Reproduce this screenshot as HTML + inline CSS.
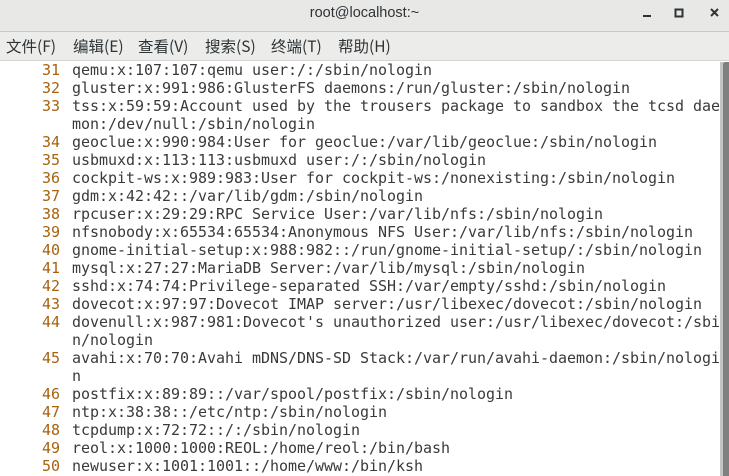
<!DOCTYPE html>
<html><head><meta charset="utf-8"><style>
body{margin:0;width:729px;height:476px;overflow:hidden;background:#fff;position:relative;font-family:"Liberation Sans","Noto Sans CJK SC",sans-serif}
#title{position:absolute;left:0;top:0;width:729px;height:31px;background:#e8e8e7;border-bottom:1px solid #c8c8c6;}
#title .t{position:absolute;left:0;width:729px;top:5px;text-align:center;font-size:14.5px;color:#2e3436}
#menu{position:absolute;left:0;top:32px;width:729px;height:28px;background:#ececeb;border-bottom:1px solid #d6d6d4}
#menu span{position:absolute;top:3px;font-size:15.5px;color:#2e3436;font-family:"Noto Sans CJK SC",sans-serif}
#sb1{position:absolute;left:720px;top:62px;width:3px;height:414px;background:#c4c4c4}
#sb2{position:absolute;left:723px;top:62px;width:6px;height:414px;background:#7e8080;border-top-left-radius:2px}
.r{position:absolute;left:0;width:720px;overflow:hidden;height:18px;font-family:"DejaVu Sans Mono",monospace;font-size:15px;line-height:18px;white-space:pre;color:#3a3a3a;letter-spacing:-0.03px}
.n{position:absolute;left:20px;width:40px;color:#a8620e;text-align:right}
.c{position:absolute;left:72px}
</style></head><body>
<div id="title"><div class="t">root@localhost:~</div>
<svg style="position:absolute;left:620px;top:0" width="109" height="31">
<rect x="23" y="15" width="8" height="2" fill="#2e3436"/>
<rect x="55.5" y="9.5" width="7" height="7" fill="none" stroke="#2e3436" stroke-width="2"/>
<path d="M91 9 L98 16 M98 9 L91 16" stroke="#2e3436" stroke-width="2"/>
</svg></div>
<div id="menu">
<span style="left:6px">文件(F)</span><span style="left:73px">编辑(E)</span><span style="left:138px">查看(V)</span><span style="left:205px">搜索(S)</span><span style="left:271px">终端(T)</span><span style="left:338px">帮助(H)</span>
</div>
<div id="sb1"></div><div id="sb2"></div>
<div class="r" style="top:61px"><span class="n">31</span><span class="c">qemu:x:107:107:qemu user:/:/sbin/nologin</span></div>
<div class="r" style="top:79px"><span class="n">32</span><span class="c">gluster:x:991:986:GlusterFS daemons:/run/gluster:/sbin/nologin</span></div>
<div class="r" style="top:97px"><span class="n">33</span><span class="c">tss:x:59:59:Account used by the trousers package to sandbox the tcsd dae</span></div>
<div class="r" style="top:115px"><span class="c">mon:/dev/null:/sbin/nologin</span></div>
<div class="r" style="top:133px"><span class="n">34</span><span class="c">geoclue:x:990:984:User for geoclue:/var/lib/geoclue:/sbin/nologin</span></div>
<div class="r" style="top:151px"><span class="n">35</span><span class="c">usbmuxd:x:113:113:usbmuxd user:/:/sbin/nologin</span></div>
<div class="r" style="top:169px"><span class="n">36</span><span class="c">cockpit-ws:x:989:983:User for cockpit-ws:/nonexisting:/sbin/nologin</span></div>
<div class="r" style="top:187px"><span class="n">37</span><span class="c">gdm:x:42:42::/var/lib/gdm:/sbin/nologin</span></div>
<div class="r" style="top:205px"><span class="n">38</span><span class="c">rpcuser:x:29:29:RPC Service User:/var/lib/nfs:/sbin/nologin</span></div>
<div class="r" style="top:223px"><span class="n">39</span><span class="c">nfsnobody:x:65534:65534:Anonymous NFS User:/var/lib/nfs:/sbin/nologin</span></div>
<div class="r" style="top:241px"><span class="n">40</span><span class="c">gnome-initial-setup:x:988:982::/run/gnome-initial-setup/:/sbin/nologin</span></div>
<div class="r" style="top:259px"><span class="n">41</span><span class="c">mysql:x:27:27:MariaDB Server:/var/lib/mysql:/sbin/nologin</span></div>
<div class="r" style="top:277px"><span class="n">42</span><span class="c">sshd:x:74:74:Privilege-separated SSH:/var/empty/sshd:/sbin/nologin</span></div>
<div class="r" style="top:295px"><span class="n">43</span><span class="c">dovecot:x:97:97:Dovecot IMAP server:/usr/libexec/dovecot:/sbin/nologin</span></div>
<div class="r" style="top:313px"><span class="n">44</span><span class="c">dovenull:x:987:981:Dovecot's unauthorized user:/usr/libexec/dovecot:/sbi</span></div>
<div class="r" style="top:331px"><span class="c">n/nologin</span></div>
<div class="r" style="top:349px"><span class="n">45</span><span class="c">avahi:x:70:70:Avahi mDNS/DNS-SD Stack:/var/run/avahi-daemon:/sbin/nologi</span></div>
<div class="r" style="top:367px"><span class="c">n</span></div>
<div class="r" style="top:385px"><span class="n">46</span><span class="c">postfix:x:89:89::/var/spool/postfix:/sbin/nologin</span></div>
<div class="r" style="top:403px"><span class="n">47</span><span class="c">ntp:x:38:38::/etc/ntp:/sbin/nologin</span></div>
<div class="r" style="top:421px"><span class="n">48</span><span class="c">tcpdump:x:72:72::/:/sbin/nologin</span></div>
<div class="r" style="top:439px"><span class="n">49</span><span class="c">reol:x:1000:1000:REOL:/home/reol:/bin/bash</span></div>
<div class="r" style="top:457px"><span class="n">50</span><span class="c">newuser:x:1001:1001::/home/www:/bin/ksh</span></div>
</body></html>
